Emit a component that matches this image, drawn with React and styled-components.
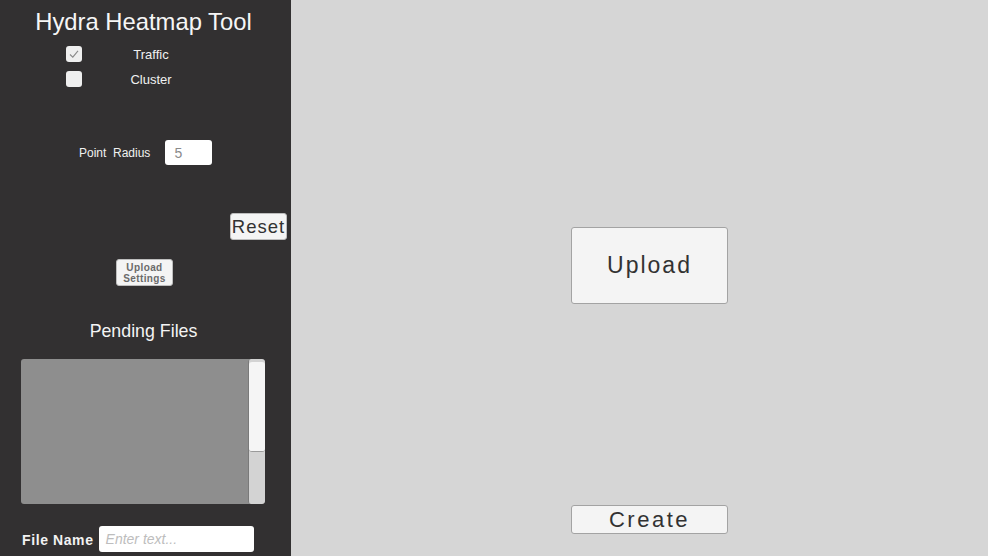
import React from "react";
import styled, { createGlobalStyle } from "styled-components";

const GlobalStyle = createGlobalStyle`
  html, body {
    margin: 0;
    padding: 0;
    height: 100%;
  }
  body {
    font-family: "Liberation Sans", Arial, sans-serif;
    background: #d6d6d6;
  }
  #root {
    height: 100%;
  }
`;

const Layout = styled.div`
  display: flex;
  height: 100vh;
  overflow: hidden;
`;

const Sidebar = styled.aside`
  flex: 0 0 291px;
  background: #323031;
  display: flex;
  flex-direction: column;
  color: #f2f2f2;
`;

const Title = styled.h1`
  margin: 8px 4px 0 0;
  font-size: 23.8px;
  font-weight: normal;
  line-height: 28px;
  text-align: center;
  color: #f6f6f6;
`;

const ToggleRow = styled.label`
  display: flex;
  align-items: center;
  height: 16px;
  margin-top: ${(p) => p.$top}px;
  padding-left: 66px;
`;

const Box = styled.span`
  width: 16px;
  height: 16px;
  border-radius: 3px;
  background: #efefef;
  display: flex;
  align-items: center;
  justify-content: center;
`;

const ToggleLabel = styled.span`
  width: 100px;
  margin-left: 19px;
  text-align: center;
  font-size: 13px;
  line-height: 16px;
  padding-top: 1px;
  color: #f0f0f0;
`;

const FieldRow = styled.div`
  display: flex;
  align-items: center;
  margin-top: 53px;
  padding-left: 79px;
  height: 25px;
`;

const FieldLabel = styled.span`
  font-size: 12px;
  color: #f0f0f0;
  white-space: pre;
`;

const SmallInput = styled.div`
  width: 47px;
  height: 25px;
  box-sizing: border-box;
  margin-left: 15px;
  background: #ffffff;
  border-radius: 3px;
  padding-left: 9px;
  display: flex;
  align-items: center;
  font-size: 14px;
  color: #8a8a8a;
`;

const Button = styled.button`
  box-sizing: border-box;
  font-family: "Liberation Sans", Arial, sans-serif;
  background: #f4f4f4;
  border: 1px solid #a3a3a3;
  border-radius: 3px;
  color: ${(p) => p.$color || "#323232"};
  font-size: ${(p) => p.$size}px;
  font-weight: ${(p) => (p.$bold ? "bold" : "normal")};
  letter-spacing: ${(p) => p.$spacing || 0}px;
  width: ${(p) => p.$w}px;
  height: ${(p) => p.$h}px;
  padding: 0;
  cursor: pointer;
`;

const ResetButton = styled(Button)`
  align-self: flex-end;
  margin: 48px 4px 0 0;
  border-color: #bdbdbd;
  padding-top: 1px;
`;

const SettingsButton = styled(Button)`
  align-self: flex-start;
  margin: 19px 0 0 116px;
  line-height: 11px;
  border-color: #bdbdbd;
`;

const Heading = styled.h2`
  margin: 34px 4px 0 0;
  font-size: 17.8px;
  font-weight: normal;
  line-height: 22px;
  text-align: center;
  color: #f4f4f4;
`;

const FileList = styled.div`
  margin: 17px 0 0 21px;
  width: 244px;
  height: 145px;
  display: flex;
  background: #8e8e8e;
  border-radius: 3px;
  overflow: hidden;
`;

const ListBody = styled.div`
  flex: 1;
`;

const Track = styled.div`
  width: 17px;
  background: #d3d3d3;
  border-left: 1px solid #7a7a7a;
  border-radius: 3px;
  padding-top: 3px;
  box-sizing: border-box;
`;

const Thumb = styled.div`
  height: 90px;
  background: #f5f5f5;
  border-radius: 3px;
  border-bottom: 1px solid #9a9a9a;
  box-sizing: border-box;
`;

const NameRow = styled.div`
  display: flex;
  align-items: center;
  margin-top: 22px;
  padding-left: 22px;
  height: 26px;
`;

const NameLabel = styled.span`
  font-size: 14px;
  font-weight: bold;
  letter-spacing: 0.6px;
  padding-top: 2px;
  color: #f2f2f2;
`;

const NameInput = styled.div`
  box-sizing: border-box;
  margin-left: 5px;
  width: 155px;
  height: 26px;
  background: #ffffff;
  border-radius: 3px;
  padding-left: 7px;
  display: flex;
  align-items: center;
  font-size: 14px;
  font-style: italic;
  color: #bdbdbd;
`;

const Main = styled.main`
  flex: 1;
  background: #d6d6d6;
  display: flex;
  flex-direction: column;
  align-items: flex-start;
  padding: 227px 0 0 280px;
`;

const CreateButton = styled(Button)`
  margin-top: 201px;
`;

const Check = () => (
  <svg width="12" height="12" viewBox="0 0 12 12">
    <path d="M2 6.5 L4.8 9.2 L10 2.8" fill="none" stroke="#8a8a8a" strokeWidth="1.1" />
  </svg>
);

const toggles = [
  { label: "Traffic", checked: true, top: 10 },
  { label: "Cluster", checked: false, top: 9 },
];

const App = () => {
  return (
    <Layout>
      <GlobalStyle />
      <Sidebar>
        <Title>Hydra Heatmap Tool</Title>
        {toggles.map((t) => (
          <ToggleRow key={t.label} $top={t.top}>
            <Box>{t.checked && <Check />}</Box>
            <ToggleLabel>{t.label}</ToggleLabel>
          </ToggleRow>
        ))}
        <FieldRow>
          <FieldLabel>Point  Radius</FieldLabel>
          <SmallInput>5</SmallInput>
        </FieldRow>
        <ResetButton $w={57} $h={27} $size={18.5} $spacing={1}>
          Reset
        </ResetButton>
        <SettingsButton $w={57} $h={27} $size={10} $bold $spacing={0.4} $color="#6a6a6a">
          Upload
          <br />
          Settings
        </SettingsButton>
        <Heading>Pending Files</Heading>
        <FileList>
          <ListBody />
          <Track>
            <Thumb />
          </Track>
        </FileList>
        <NameRow>
          <NameLabel>File Name</NameLabel>
          <NameInput>Enter text...</NameInput>
        </NameRow>
      </Sidebar>
      <Main>
        <Button $w={157} $h={77} $size={23} $spacing={2}>
          Upload
        </Button>
        <CreateButton $w={157} $h={29} $size={22} $spacing={2.5}>
          Create
        </CreateButton>
      </Main>
    </Layout>
  );
};

export default App;
